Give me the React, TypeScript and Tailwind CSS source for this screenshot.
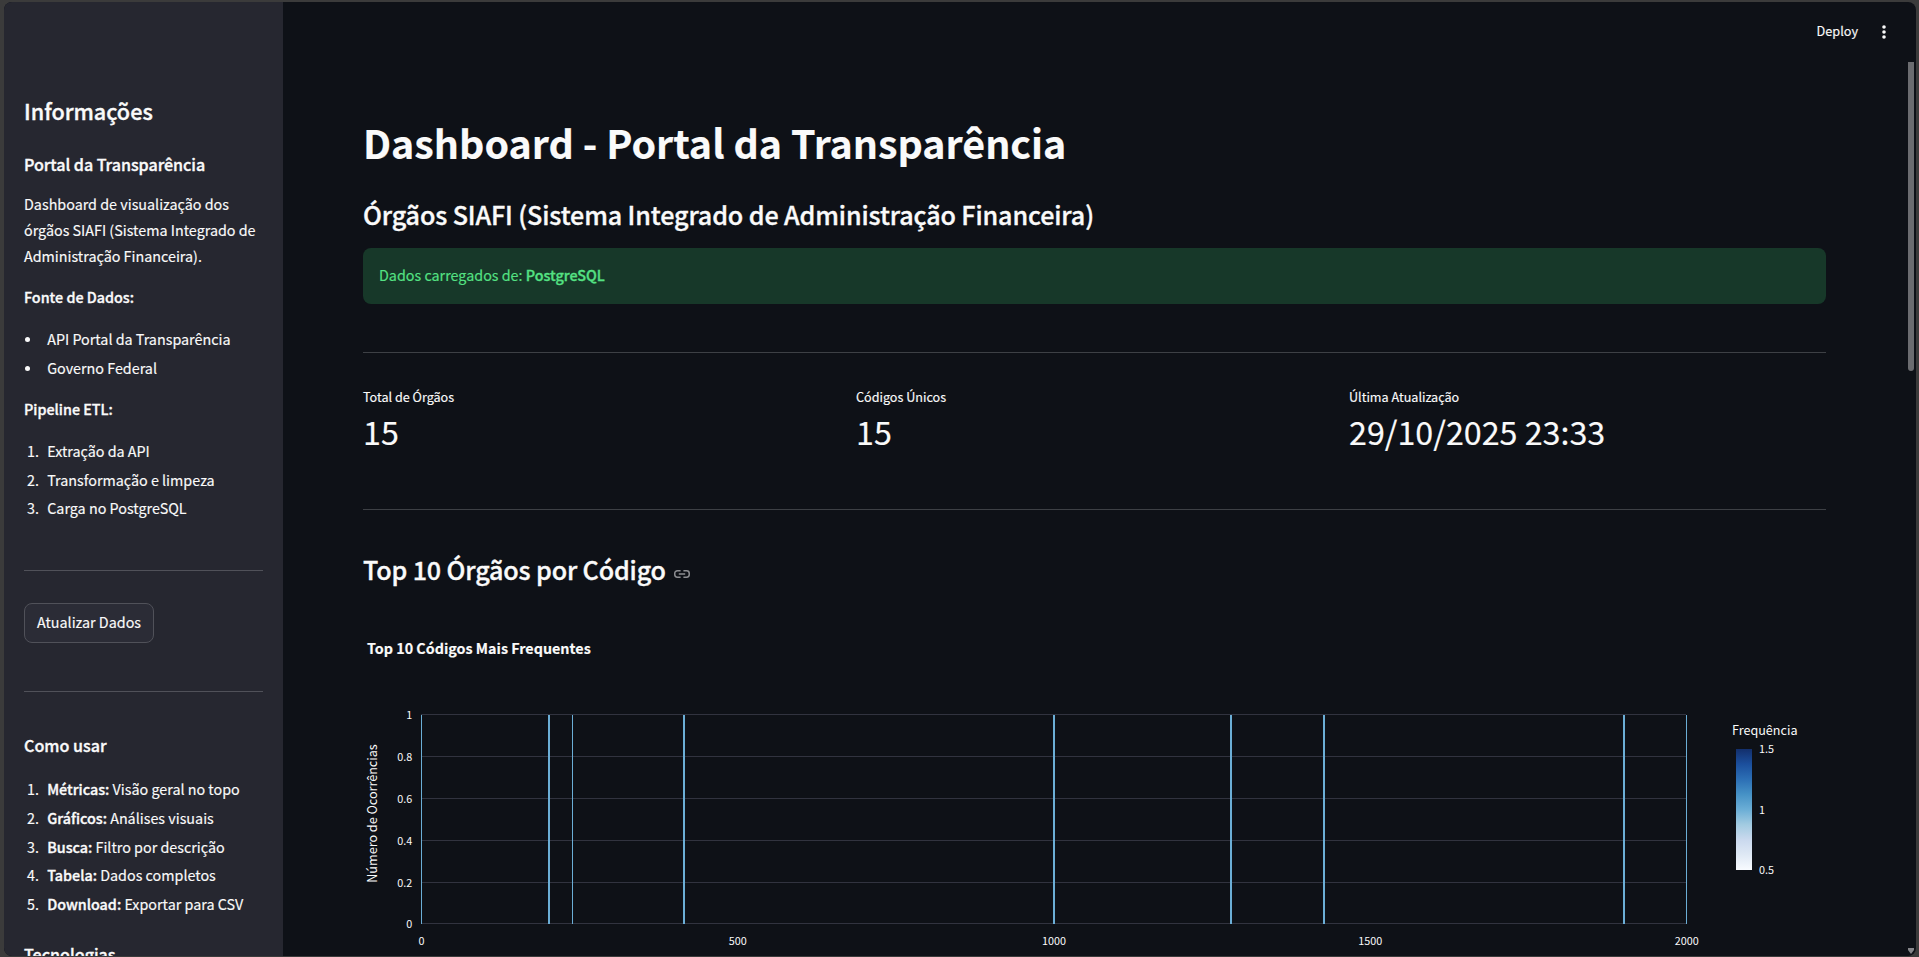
import type { ReactNode } from "react";

const semibold = "font-medium [-webkit-text-stroke:0.35px_currentColor]";

const usage = [
  ["Métricas:", "Visão geral no topo"],
  ["Gráficos:", "Análises visuais"],
  ["Busca:", "Filtro por descrição"],
  ["Tabela:", "Dados completos"],
  ["Download:", "Exportar para CSV"],
];

const metrics = [
  { label: "Total de Órgãos", value: "15" },
  { label: "Códigos Únicos", value: "15" },
  { label: "Última Atualização", value: "29/10/2025 23:33" },
];

function Strong({ children }: { children: ReactNode }) {
  return <strong className={semibold}>{children}</strong>;
}

function ListItem({ marker, children }: { marker: ReactNode; children: ReactNode }) {
  return (
    <li className="flex">
      <span className="flex w-[23.2px] shrink-0 items-center pl-[3px]">{marker}</span>
      <span className="whitespace-nowrap">{children}</span>
    </li>
  );
}

function Bullet() {
  return <span className="-ml-0.5 size-[5px] rounded-full bg-[#fafafa]" />;
}

function Sidebar() {
  return (
    <aside className="flex w-[279px] shrink-0 flex-col overflow-hidden bg-[#262730] px-5 pt-[94px] text-[14.33px] leading-[26px]">
      <h2 className={"shrink-0 text-[21.6px] leading-[30px] " + semibold}>Informações</h2>
      <h4 className={"mt-[27px] shrink-0 text-[16.1px] leading-[22px] tracking-[-0.05px] " + semibold}>Portal da Transparência</h4>
      <p className="mt-4 shrink-0">
        Dashboard de visualização dos
        <br />
        órgãos SIAFI (Sistema Integrado de
        <br />
        Administração Financeira).
      </p>
      <p className="mt-[15px] shrink-0">
        <Strong>Fonte de Dados:</Strong>
      </p>
      <ul className="mt-4 flex shrink-0 flex-col gap-[3px]">
        <ListItem marker={<Bullet />}>API Portal da Transparência</ListItem>
        <ListItem marker={<Bullet />}>Governo Federal</ListItem>
      </ul>
      <p className="mt-[15px] shrink-0">
        <Strong>Pipeline ETL:</Strong>
      </p>
      <ol className="mt-4 flex shrink-0 flex-col gap-[2.7px]">
        {["Extração da API", "Transformação e limpeza", "Carga no PostgreSQL"].map((step, i) => (
          <ListItem key={step} marker={`${i + 1}.`}>
            {step}
          </ListItem>
        ))}
      </ol>
      <div className="mt-[48.6px] h-px shrink-0 bg-[#505159]" />
      <button className="mt-8 flex h-10 w-[130px] shrink-0 items-center justify-center rounded-lg border border-[#505159] bg-[#2b2c36] pb-0.5">
        Atualizar Dados
      </button>
      <div className="mt-12 h-px shrink-0 bg-[#505159]" />
      <h4 className={"mt-[42px] shrink-0 text-[16.1px] leading-[22px] " + semibold}>Como usar</h4>
      <ol className="mt-5 flex shrink-0 flex-col gap-[2.8px]">
        {usage.map(([name, text], i) => (
          <ListItem key={name} marker={`${i + 1}.`}>
            <Strong>{name}</Strong> {text}
          </ListItem>
        ))}
      </ol>
      <h4 className={"mt-[26px] shrink-0 text-[16.1px] leading-[22px] " + semibold}>Tecnologias</h4>
    </aside>
  );
}

function LinkIcon() {
  return (
    <svg width="16" height="8" viewBox="0 0 16 8" fill="none" stroke="#8d8e92" strokeWidth="1.5">
      <path d="M6.6 .75H3.4A2.65 2.65 0 0 0 .75 3.4v1.2A2.65 2.65 0 0 0 3.4 7.25h3.2M9.4 .75h3.2a2.65 2.65 0 0 1 2.65 2.65v1.2a2.65 2.65 0 0 1-2.65 2.65H9.4M4.8 4h6.4" />
    </svg>
  );
}

const gridRows = [
  { y: 714, label: "1" },
  { y: 756, label: "0.8" },
  { y: 798, label: "0.6" },
  { y: 840, label: "0.4" },
  { y: 882, label: "0.2" },
  { y: 923, label: "0" },
];
const bars = [
  [421, 1],
  [548, 2],
  [572, 1],
  [683, 2],
  [1053, 2],
  [1230, 2],
  [1323, 2],
  [1623, 2],
  [1686, 1],
];
const xTicks = [
  { x: 421.5, label: "0" },
  { x: 737.7, label: "500" },
  { x: 1054, label: "1000" },
  { x: 1370.3, label: "1500" },
  { x: 1686.7, label: "2000" },
];
const blues = ["#132f6c", "#1b4f9d", "#2c6fb5", "#4692c6", "#6baed6", "#a2cbe1", "#cad9ee", "#dfe9f5", "#f8fbff"];

function FrequencyChart() {
  return (
    <svg className="block shrink-0" width="1463" height="296" viewBox="363 660 1463 296" fill="#fafafa" fontSize="10.8">
      <defs>
        <linearGradient id="blues" x1="0" y1="0" x2="0" y2="1">
          {blues.map((c, i) => (
            <stop key={c} offset={i / 8} stopColor={c} />
          ))}
        </linearGradient>
      </defs>
      {gridRows.map(({ y, label }) => (
        <g key={y}>
          <rect x="421" y={y} width="1265" height="1" fill="#31333f" />
          <text x="412.3" y={y + 5} textAnchor="end">
            {label}
          </text>
        </g>
      ))}
      {bars.map(([x, w]) => (
        <rect key={x} x={x} y="715" width={w} height="209" fill="#6baed6" />
      ))}
      {xTicks.map(({ x, label }) => (
        <text key={x} x={x} y="945" textAnchor="middle">
          {label}
        </text>
      ))}
      <text transform="translate(377 813.5) rotate(-90)" textAnchor="middle" fontSize="12.6">
        Número de Ocorrências
      </text>
      <text x="1732" y="735" fontSize="12.6">
        Frequência
      </text>
      <rect x="1736" y="749" width="16" height="121" fill="url(#blues)" />
      <text x="1759" y="753">1.5</text>
      <text x="1759" y="814">1</text>
      <text x="1759" y="874">0.5</text>
    </svg>
  );
}

function Main() {
  return (
    <main className="flex min-w-0 flex-1 flex-col overflow-hidden">
      <header className="flex h-[60px] shrink-0 items-center justify-end pr-[30px] text-[12.7px]">
        <span className="pb-0.5 leading-5">Deploy</span>
        <svg className="ml-[24px]" width="4" height="14" viewBox="0 0 4 14" fill="#fafafa">
          <circle cx="2" cy="2" r="1.8" />
          <circle cx="2" cy="7" r="1.8" />
          <circle cx="2" cy="12" r="1.8" />
        </svg>
      </header>
      <div className="flex flex-col pr-[90px] pl-20">
        <h1 className="mt-[54px] shrink-0 text-[39.4px] leading-[52px] font-bold tracking-[-0.02px]">Dashboard - Portal da Transparência</h1>
        <h3 className={"mt-[29px] shrink-0 text-[25.1px] leading-[34px] tracking-[-0.11px] " + semibold}>
          Órgãos SIAFI (Sistema Integrado de Administração Financeira)
        </h3>
        <div className="mt-[17px] flex h-14 shrink-0 items-start rounded-lg bg-[#173829] px-4 pt-[14px] text-[14.33px] leading-[26px] text-[#54e183]">
          <p>
            Dados carregados de: <Strong>PostgreSQL</Strong>
          </p>
        </div>
        <div className="mt-12 h-px shrink-0 bg-[#3d4045]" />
        <div className="mt-[34px] grid shrink-0 grid-cols-3 gap-4">
          {metrics.map((m) => (
            <div key={m.label}>
              <div className="text-[12.6px] leading-5">{m.label}</div>
              <div className="mt-0.5 text-[32.25px] leading-[44px]">{m.value}</div>
            </div>
          ))}
        </div>
        <div className="mt-14 h-px shrink-0 bg-[#3d4045]" />
        <div className="mt-[42px] flex h-[34px] shrink-0 items-center gap-2">
          <h3 className={"text-[25.1px] leading-[34px] tracking-[-0.14px] " + semibold}>Top 10 Órgãos por Código</h3>
          <div className="pt-[10px]">
            <LinkIcon />
          </div>
        </div>
        <div className="mt-[50px] h-6 shrink-0 pl-1 text-[14.33px] leading-6 font-bold">Top 10 Códigos Mais Frequentes</div>
        <FrequencyChart />
      </div>
    </main>
  );
}

export default function App() {
  return (
    <div className="flex h-[957px] w-full overflow-hidden bg-[#3b3b3b] pt-0.5 pr-[3px] pb-px pl-1 text-[#fafafa] [-webkit-text-stroke:0.15px_currentColor] [font-family:'Noto_Sans_CJK_JP','Noto_Sans',sans-serif]">
      <div className="relative flex flex-1 overflow-hidden rounded-lg bg-[#0e1117]">
        <Sidebar />
        <Main />
        <div className="absolute top-[60px] right-0.5 h-[309px] w-1.5 rounded-b-full bg-[#6b6c70]" />
        <svg className="absolute right-0.5 bottom-0.5" width="6" height="6" viewBox="0 0 6 6" fill="#85868a">
          <path d="M0 0h6v2L3 6 0 2z" />
        </svg>
      </div>
    </div>
  );
}
